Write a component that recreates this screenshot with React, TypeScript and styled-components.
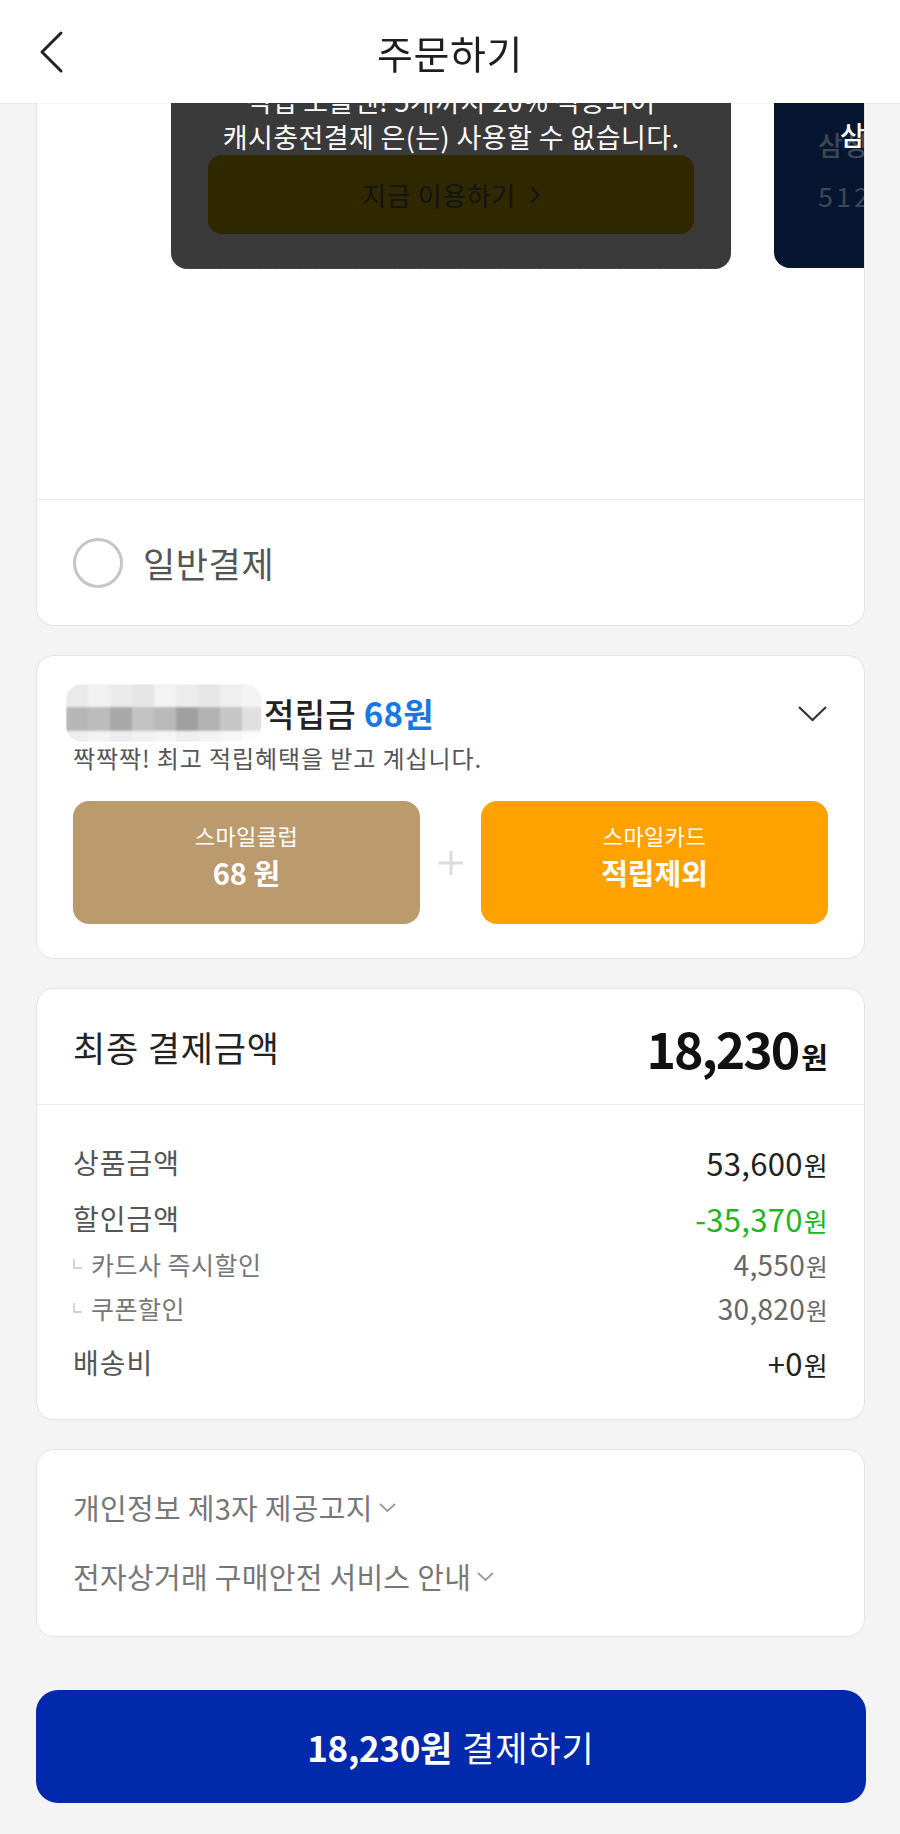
import React from "react";
import styled, { createGlobalStyle } from "styled-components";

const Global = createGlobalStyle`
  html, body { margin: 0; padding: 0; background: #f4f4f4; }
  body {
    font-family: "Noto Sans CJK KR", "Noto Sans", sans-serif;
    color: #222;
    -webkit-font-smoothing: antialiased;
  }
  #root { width: 900px; }
  * { box-sizing: border-box; }
`;

const Page = styled.main`
  display: flex;
  flex-direction: column;
  gap: 29px;
  width: 900px;
  min-height: 1834px;
  padding: 0 35px 36px 36px;
`;

const Header = styled.header`
  position: fixed;
  top: 0;
  left: 0;
  width: 900px;
  height: 103px;
  background: #fff;
  z-index: 10;
  display: grid;
  grid-template-columns: 120px 1fr 120px;
  align-items: center;
  box-shadow: 0 1px 0 rgba(0, 0, 0, 0.04);
`;

const BackButton = styled.button`
  background: none;
  border: 0;
  height: 100%;
  padding: 0 0 0 38px;
  display: flex;
  align-items: center;
  cursor: pointer;
`;

const Title = styled.h1`
  margin: 0;
  text-align: center;
  font-size: 39px;
  font-weight: 400;
  color: #1e1e1e;
  letter-spacing: 0.6px;
`;

const Card = styled.section<{ $flatTop?: boolean }>`
  background: #fff;
  border: 1px solid #e4e4e4;
  border-radius: ${(p) => (p.$flatTop ? "0 0 18px 18px" : "18px")};
  ${(p) => (p.$flatTop ? "border-top: 0;" : "")}
  overflow: hidden;
`;

const Carousel = styled.div`
  display: flex;
  gap: 43px;
  padding: 0 0 230px 134px;
  overflow: hidden;
`;

const Panel = styled.div`
  flex: 0 0 560px;
  background: #3a3a3a;
  border-radius: 0 0 16px 16px;
  border-bottom: 1px dashed #4a4a4a;
  padding: 83px 30px 34px;
  color: #fff;
  text-align: center;
`;

const PanelText = styled.p`
  margin: 0;
  font-size: 27px;
  line-height: 36px;
  white-space: nowrap;
  letter-spacing: 0.4px;
`;

const DimButton = styled.div`
  display: flex;
  align-items: center;
  justify-content: center;
  gap: 14px;
  height: 79px;
  margin: 0 7px;
  border-radius: 14px;
  background: #2f2800;
  color: #141414;
  font-size: 26px;
  letter-spacing: 0.6px;
`;

const NavyCard = styled.div`
  position: relative;
  flex: 0 0 560px;
  height: 268px;
  background: #061631;
  border-radius: 0 0 16px 16px;
  padding: 127px 0 0 44px;
  color: #3f4757;
`;

const NavyName = styled.div`
  font-size: 27px;
  line-height: 36px;
  font-weight: 500;
  white-space: nowrap;
`;

const NavyNumber = styled.div`
  margin-top: 15px;
  font-size: 27px;
  line-height: 36px;
  letter-spacing: 3px;
`;

const GhostLabel = styled.span`
  position: absolute;
  left: 66px;
  top: 117px;
  font-size: 27px;
  line-height: 36px;
  font-weight: 500;
  color: #fff;
`;

const RadioRow = styled.label`
  display: flex;
  align-items: center;
  gap: 20px;
  height: 126px;
  padding-left: 36px;
  border-top: 1px solid #ececec;
`;

const RadioCircle = styled.span`
  width: 50px;
  height: 50px;
  border-radius: 50%;
  border: 3px solid #c6c6c6;
`;

const RadioLabel = styled.span`
  font-size: 35px;
  color: #555;
  letter-spacing: 0.6px;
`;

const RewardBody = styled.div`
  padding: 28px 36px 34px;
`;

const TitleRow = styled.div`
  display: flex;
  align-items: center;
  justify-content: space-between;
  height: 58px;
`;

const TitleLeft = styled.div`
  display: flex;
  align-items: center;
`;

const Mosaic = styled.svg`
  margin-left: -7px;
`;

const TitleText = styled.span`
  margin-left: 3px;
  font-size: 33px;
  font-weight: 500;
  color: #222;
  white-space: nowrap;
  letter-spacing: 0.3px;
`;

const Blue = styled.b`
  color: #1877e6;
  font-weight: 700;
`;

const SubText = styled.p`
  margin: 1px 0 0;
  font-size: 24px;
  line-height: 30px;
  letter-spacing: 0.9px;
  color: #555;
`;

const Rewards = styled.div`
  display: grid;
  grid-template-columns: 347px 1fr 347px;
  height: 123px;
  margin-top: 28px;
`;

const RewardBox = styled.div<{ $tone: string }>`
  display: flex;
  flex-direction: column;
  align-items: center;
  justify-content: center;
  padding-bottom: 14px;
  border-radius: 16px;
  background: ${(p) => p.$tone};
  color: #fff;
`;

const RewardLabel = styled.span`
  font-size: 22px;
  line-height: 30px;
  letter-spacing: 0.5px;
`;

const RewardValue = styled.span`
  margin-top: 2px;
  font-size: 29px;
  line-height: 40px;
  font-weight: 700;
`;

const PlusCell = styled.div`
  display: flex;
  align-items: center;
  justify-content: center;
`;

const SummaryHead = styled.div`
  display: flex;
  align-items: center;
  justify-content: space-between;
  height: 116px;
  padding: 0 36px;
  border-bottom: 1px solid #ececec;
`;

const HeadLabel = styled.span`
  font-size: 35px;
  color: #222;
  letter-spacing: 0.8px;
`;

const Total = styled.span`
  display: flex;
  align-items: baseline;
  color: #111;
  font-weight: 700;
`;

const TotalNum = styled.span`
  font-size: 50px;
  letter-spacing: -2px;
`;

const TotalUnit = styled.span`
  margin-left: 3px;
  font-size: 29px;
`;

const Rows = styled.div`
  padding: 37px 36px;
`;

const Row = styled.div<{ $sub?: boolean }>`
  display: flex;
  align-items: center;
  justify-content: space-between;
  height: ${(p) => (p.$sub ? 36 : 40)}px;
  margin-top: ${(p) => (p.$sub ? 8 : 16)}px;
  &:first-child { margin-top: 0; }
`;

const RowLabel = styled.span<{ $sub?: boolean }>`
  display: flex;
  align-items: center;
  gap: 9px;
  font-size: ${(p) => (p.$sub ? 25 : 28)}px;
  letter-spacing: ${(p) => (p.$sub ? 0.5 : 1)}px;
  color: ${(p) => (p.$sub ? "#777" : "#555")};
`;

const RowValue = styled.span<{ $color: string; $sub?: boolean }>`
  font-size: ${(p) => (p.$sub ? 28 : 31)}px;
  color: ${(p) => p.$color};
  letter-spacing: 0.3px;
`;

const Unit = styled.span`
  font-size: 0.84em;
  margin-left: 1px;
`;

const Notices = styled.div`
  display: flex;
  flex-direction: column;
  gap: 29px;
  padding: 37px 36px 40px;
`;

const NoticeLink = styled.div`
  display: flex;
  align-items: center;
  gap: 5px;
  font-size: 29px;
  line-height: 40px;
  letter-spacing: 0.3px;
  color: #777;
`;

const PayButton = styled.button`
  margin-top: 24px;
  height: 113px;
  width: 830px;
  border: 0;
  border-radius: 22px;
  background: #0029ab;
  color: #fff;
  font-family: inherit;
  font-size: 35px;
  letter-spacing: 1px;
  display: flex;
  align-items: center;
  justify-content: center;
  gap: 10px;
  cursor: pointer;
`;

const PayStrong = styled.b`
  font-weight: 700;
  letter-spacing: -0.3px;
`;

const SubMark = () => (
  <svg width="9" height="10" viewBox="0 0 9 10">
    <path d="M1 0 V9 H9" fill="none" stroke="#c4c4c4" strokeWidth="1.4" />
  </svg>
);

const SmallChevron = () => (
  <svg width="19" height="11" viewBox="0 0 19 11">
    <path d="M2 2 L9.5 9 L17 2" fill="none" stroke="#9a9a9a" strokeWidth="1.8" />
  </svg>
);

const mosaicRows = [
  ["#eaeaea", "#f1f1f1", "#ebebeb", "#e5e5e5", "#f3f3f3", "#ececec", "#e7e7e7", "#efefef", "#f4f4f4"],
  ["#b7b7b7", "#bcbcbc", "#a9a9a9", "#c3c3c3", "#b9b9b9", "#a0a0a0", "#b2b2b2", "#c6c6c6", "#e0e0e0"],
  ["#eeeeee", "#f3f3f3", "#ededed", "#f1f1f1", "#f5f5f5", "#eeeeee", "#f2f2f2", "#f7f7f7", "#fbfbfb"],
];

type Line = { label: string; value: string; color: string; sub?: boolean };

const lines: Line[] = [
  { label: "상품금액", value: "53,600", color: "#222" },
  { label: "할인금액", value: "-35,370", color: "#22b422" },
  { label: "카드사 즉시할인", value: "4,550", color: "#666", sub: true },
  { label: "쿠폰할인", value: "30,820", color: "#666", sub: true },
  { label: "배송비", value: "+0", color: "#222" },
];

export default function App() {
  return (
    <>
      <Global />
      <Header>
        <BackButton aria-label="뒤로">
          <svg width="26" height="44" viewBox="0 0 26 44">
            <path d="M23 3 L4 22 L23 41" fill="none" stroke="#222" strokeWidth="3" strokeLinecap="round" strokeLinejoin="round" />
          </svg>
        </BackButton>
        <Title>주문하기</Title>
        <span />
      </Header>

      <Page>
        <Card $flatTop>
          <Carousel>
            <Panel>
              <PanelText>적립 모을땐! 5개까지 20% 적용되어</PanelText>
              <PanelText>캐시충전결제 은(는) 사용할 수 없습니다.</PanelText>
              <DimButton>
                지금 이용하기
                <svg width="10" height="18" viewBox="0 0 10 18">
                  <path d="M1.5 1.5 L8.5 9 L1.5 16.5" fill="none" stroke="#141414" strokeWidth="2" />
                </svg>
              </DimButton>
            </Panel>
            <NavyCard>
              <NavyName>삼성카드</NavyName>
              <NavyNumber>5123</NavyNumber>
              <GhostLabel>삼</GhostLabel>
            </NavyCard>
          </Carousel>
          <RadioRow>
            <RadioCircle />
            <RadioLabel>일반결제</RadioLabel>
          </RadioRow>
        </Card>

        <Card>
          <RewardBody>
            <TitleRow>
              <TitleLeft>
                <Mosaic width="195" height="58" viewBox="0 0 195 58">
                  <defs>
                    <filter id="soft">
                      <feGaussianBlur stdDeviation="0.8" />
                    </filter>
                    <clipPath id="mclip">
                      <rect x="0" y="0" width="195" height="58" rx="16" />
                    </clipPath>
                  </defs>
                  <g clipPath="url(#mclip)" filter="url(#soft)">
                    {mosaicRows.map((row, r) =>
                      row.map((c, i) => (
                        <rect key={`${r}-${i}`} x={i * 22} y={[0, 23, 47][r]} width="22" height={[23, 24, 11][r]} fill={c} />
                      ))
                    )}
                  </g>
                </Mosaic>
                <TitleText>
                  적립금 <Blue>68원</Blue>
                </TitleText>
              </TitleLeft>
              <svg width="31" height="17" viewBox="0 0 31 17">
                <path d="M2 2 L15.5 15 L29 2" fill="none" stroke="#333" strokeWidth="2.2" />
              </svg>
            </TitleRow>
            <SubText>짝짝짝! 최고 적립혜택을 받고 계십니다.</SubText>
            <Rewards>
              <RewardBox $tone="#bb9a6e">
                <RewardLabel>스마일클럽</RewardLabel>
                <RewardValue>68 원</RewardValue>
              </RewardBox>
              <PlusCell>
                <svg width="26" height="26" viewBox="0 0 26 26">
                  <path d="M13 1 V25 M1 13 H25" stroke="#dcdcdc" strokeWidth="3" />
                </svg>
              </PlusCell>
              <RewardBox $tone="#ffa200">
                <RewardLabel>스마일카드</RewardLabel>
                <RewardValue>적립제외</RewardValue>
              </RewardBox>
            </Rewards>
          </RewardBody>
        </Card>

        <Card>
          <SummaryHead>
            <HeadLabel>최종 결제금액</HeadLabel>
            <Total>
              <TotalNum>18,230</TotalNum>
              <TotalUnit>원</TotalUnit>
            </Total>
          </SummaryHead>
          <Rows>
            {lines.map((l) => (
              <Row key={l.label} $sub={l.sub}>
                <RowLabel $sub={l.sub}>
                  {l.sub && <SubMark />}
                  {l.label}
                </RowLabel>
                <RowValue $color={l.color} $sub={l.sub}>
                  {l.value}
                  <Unit>원</Unit>
                </RowValue>
              </Row>
            ))}
          </Rows>
        </Card>

        <Card>
          <Notices>
            <NoticeLink>
              개인정보 제3자 제공고지
              <SmallChevron />
            </NoticeLink>
            <NoticeLink>
              전자상거래 구매안전 서비스 안내
              <SmallChevron />
            </NoticeLink>
          </Notices>
        </Card>

        <PayButton>
          <PayStrong>18,230원</PayStrong>
          결제하기
        </PayButton>
      </Page>
    </>
  );
}
